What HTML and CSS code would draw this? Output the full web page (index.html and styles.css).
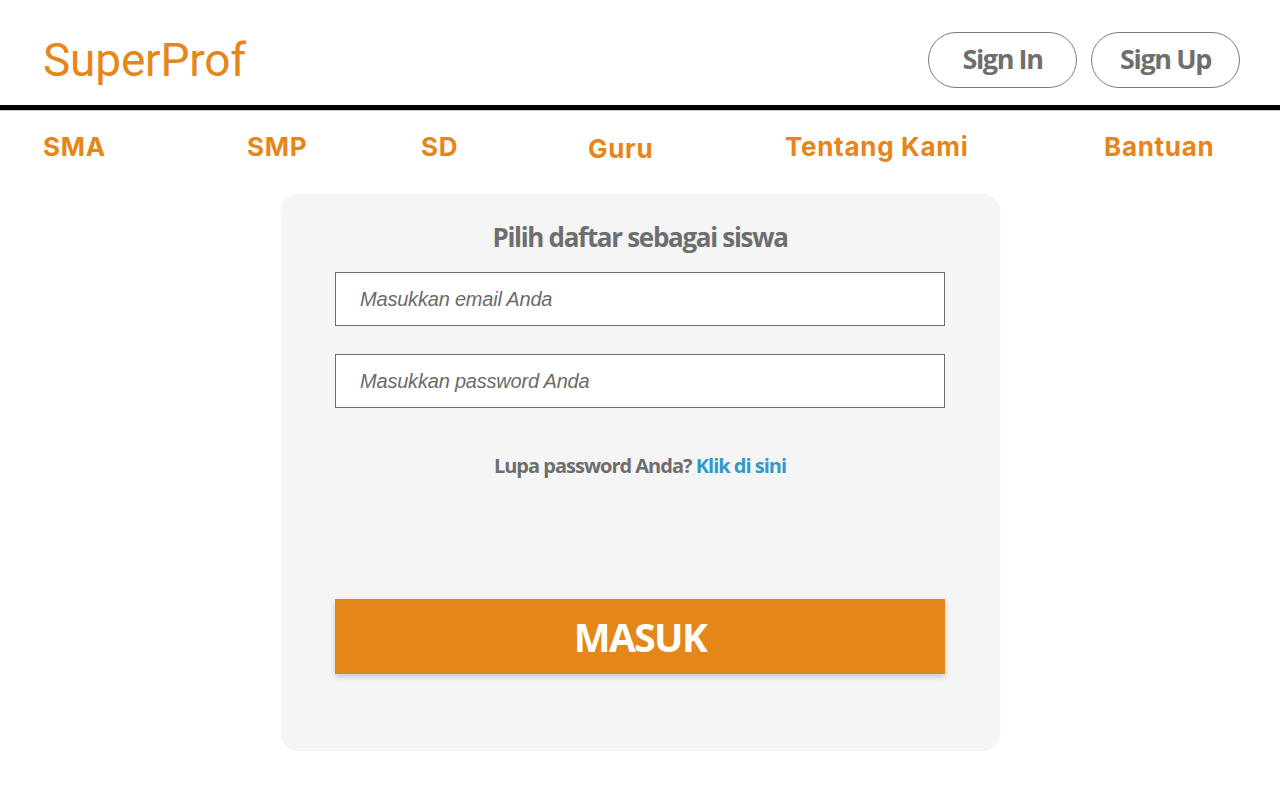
FILE: index.html
```html
<!DOCTYPE html>
<html lang="id">
<head>
<meta charset="utf-8">
<title>SuperProf - Masuk</title>
<link rel="stylesheet" href="styles.css">
</head>
<body>
<header class="topbar">
  <a class="logo" href="#">SuperProf</a>
  <div class="auth">
    <a class="pill" href="#">Sign In</a>
    <a class="pill" href="#">Sign Up</a>
  </div>
</header>
<nav class="nav">
  <a href="#">SMA</a>
  <a href="#">SMP</a>
  <a href="#">SD</a>
  <a href="#" class="guru">Guru</a>
  <a href="#">Tentang Kami</a>
  <a href="#">Bantuan</a>
</nav>
<main class="main">
  <form class="card">
    <h1 class="title">Pilih daftar sebagai siswa</h1>
    <input class="field" type="email" placeholder="Masukkan email Anda">
    <input class="field" type="password" placeholder="Masukkan password Anda">
    <p class="forgot">Lupa password Anda? <a href="#">Klik di sini</a></p>
    <button class="submit" type="button">MASUK</button>
  </form>
</main>
</body>
</html>
```
FILE: styles.css
```css
* { box-sizing: border-box; }
html, body { margin: 0; padding: 0; background: #fff; }
body { font-family: "Open Sans", "Liberation Sans", sans-serif; }
a { text-decoration: none; }

.topbar {
  height: 105px;
  display: flex;
  align-items: center;
  justify-content: space-between;
  padding: 14px 40px 0 43px;
}
.logo {
  font-family: Roboto, sans-serif;
  font-size: 46px;
  font-weight: 400;
  color: #e6861a;
  letter-spacing: -0.2px;
}
.auth { display: flex; gap: 14px; }
.pill {
  width: 149px;
  height: 56px;
  border: 1px solid #7a7a7a;
  border-radius: 28px;
  display: flex;
  align-items: center;
  justify-content: center;
  color: #6e6e6e;
  font-size: 27px;
  font-weight: 700;
  letter-spacing: -1.4px;
  padding-bottom: 2px;
}

.nav {
  border-top: 5px solid #000;
  box-shadow: inset 0 1px 0 #c8c8c8;
  display: grid;
  grid-template-columns: 204px 174px 167px 197px 319px auto;
  padding: 13px 0 0 43px;
  height: 89px;
}
.nav a {
  font-family: "Inter", sans-serif;
  font-size: 26px;
  font-weight: 700;
  color: #e6861a;
  letter-spacing: 0.7px;
  line-height: 48px;
  height: 48px;
}
.nav .guru { margin-top: 2px; }

.main { display: flex; justify-content: center; }
.card {
  width: 719px;
  height: 557px;
  background: #f5f5f5;
  border-radius: 18px;
  box-shadow: 0 0 2px rgba(0,0,0,0.05);
  display: flex;
  flex-direction: column;
  align-items: center;
  padding-top: 24px;
}
.title {
  margin: 0 0 16px;
  font-size: 26px;
  font-weight: 700;
  color: #6e6e6e;
  letter-spacing: -1.3px;
  line-height: 38px;
}
.field {
  width: 610px;
  height: 54px;
  border: 1px solid #6f6f6f;
  background: #fff;
  padding: 0 0 0 24px;
  font-family: "Liberation Sans", Arial, sans-serif;
  font-size: 20px;
  font-style: italic;
  color: #333;
  margin-bottom: 28px;
  outline: none;
}
.field::placeholder { color: #6b6b6b; letter-spacing: -0.2px; }
.forgot {
  margin: 14px 0 0;
  font-size: 20px;
  font-weight: 700;
  color: #6e6e6e;
  letter-spacing: -1px;
  line-height: 32px;
}
.forgot a { color: #3399cc; }
.submit {
  margin-top: 117px;
  width: 610px;
  height: 75px;
  border: 0;
  background: #e48718;
  box-shadow: 0 3px 6px rgba(0,0,0,0.18);
  color: #fff;
  font-family: "Open Sans", sans-serif;
  font-size: 39px;
  font-weight: 700;
  letter-spacing: -1.6px;
  padding-bottom: 2px;
  cursor: pointer;
}
```
